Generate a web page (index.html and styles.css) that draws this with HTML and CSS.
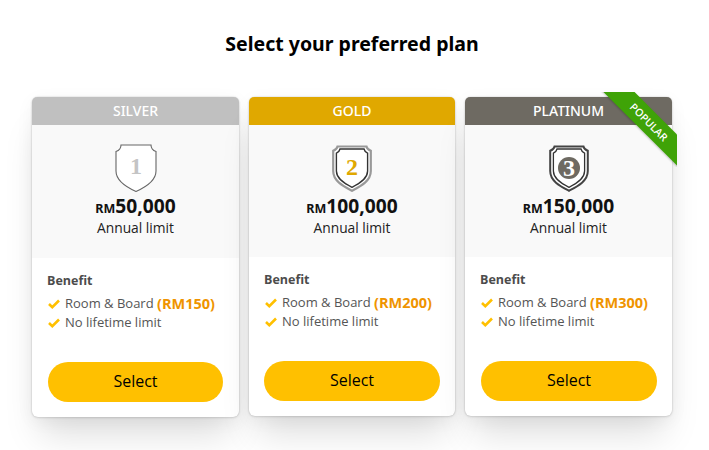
FILE: index.html
```html
<!DOCTYPE html>
<html lang="en">
<head>
<meta charset="utf-8">
<title>Select your preferred plan</title>
<link rel="stylesheet" href="styles.css">
</head>
<body>
<main class="page">
  <h1 class="title">Select your preferred plan</h1>
  <div class="plans">
    <section class="card card-silver">
      <div class="tier">SILVER</div>
      <div class="summary">
        <svg class="shield" viewBox="0 0 42 48" aria-hidden="true">
          <path class="line-thin" d="M6 1H36C36 4 38 6.500 41 7.500V27C41 37 31 43 21 47.500C11 43 1 37 1 27V7.500C4 6.500 6 4 6 1Z"/>
          <text x="21" y="30" class="digit digit-silver">1</text>
        </svg>
        <div class="price"><span class="cur">RM</span>50,000</div>
        <div class="limit">Annual limit</div>
      </div>
      <div class="details">
        <div class="benefit">Benefit</div>
        <ul class="list">
          <li><svg class="tick" viewBox="0 0 12 10" aria-hidden="true"><path d="M1 5L4.300 8.200L11 1.500"/></svg>Room &amp; Board <b class="extra">(RM150)</b></li>
          <li><svg class="tick" viewBox="0 0 12 10" aria-hidden="true"><path d="M1 5L4.300 8.200L11 1.500"/></svg>No lifetime limit</li>
        </ul>
        <button class="select">Select</button>
      </div>
    </section>
    <section class="card card-gold">
      <div class="tier">GOLD</div>
      <div class="summary">
        <svg class="shield shield-tight" viewBox="0 0 40 47" aria-hidden="true">
          <path class="line-outer" d="M5.500 1.500H34.500C35 3.500 36.500 5 38.800 5.800V26C38.800 36 29 41 20 45.800C11 41 1.200 36 1.200 26V5.800C3.500 5 5 3.500 5.500 1.500Z"/>
          <path class="line-inner" d="M8 4H18.500M21.500 4H32C32.500 6 33.800 7.500 35.600 8.200V26C35.600 34 27 38.800 20 42.300C13 38.800 4.400 34 4.400 26V8.200C6.200 7.500 7.500 6 8 4Z"/>
          <text x="20" y="30" class="digit digit-gold">2</text>
        </svg>
        <div class="price"><span class="cur">RM</span>100,000</div>
        <div class="limit">Annual limit</div>
      </div>
      <div class="details">
        <div class="benefit">Benefit</div>
        <ul class="list">
          <li><svg class="tick" viewBox="0 0 12 10" aria-hidden="true"><path d="M1 5L4.300 8.200L11 1.500"/></svg>Room &amp; Board <b class="extra">(RM200)</b></li>
          <li><svg class="tick" viewBox="0 0 12 10" aria-hidden="true"><path d="M1 5L4.300 8.200L11 1.500"/></svg>No lifetime limit</li>
        </ul>
        <button class="select">Select</button>
      </div>
    </section>
    <section class="card card-platinum">
      <div class="tier">PLATINUM</div>
      <div class="ribbon"><span>POPULAR</span></div>
      <div class="summary">
        <svg class="shield shield-tight" viewBox="0 0 40 47" aria-hidden="true">
          <path class="line-dark" d="M5.500 1.500H34.500C35 3.500 36.500 5 38.800 5.800V26C38.800 36 29 41 20 45.800C11 41 1.200 36 1.200 26V5.800C3.500 5 5 3.500 5.500 1.500Z"/>
          <path class="line-dark-thin" d="M8 4H18.500M21.500 4H32C32.500 6 33.800 7.500 35.600 8.200V26C35.600 34 27 38.800 20 42.300C13 38.800 4.400 34 4.400 26V8.200C6.200 7.500 7.500 6 8 4Z"/>
          <circle cx="20" cy="23" r="11" class="disc"/>
          <text x="20" y="30.500" class="digit digit-white">3</text>
        </svg>
        <div class="price"><span class="cur">RM</span>150,000</div>
        <div class="limit">Annual limit</div>
      </div>
      <div class="details">
        <div class="benefit">Benefit</div>
        <ul class="list">
          <li><svg class="tick" viewBox="0 0 12 10" aria-hidden="true"><path d="M1 5L4.300 8.200L11 1.500"/></svg>Room &amp; Board <b class="extra">(RM300)</b></li>
          <li><svg class="tick" viewBox="0 0 12 10" aria-hidden="true"><path d="M1 5L4.300 8.200L11 1.500"/></svg>No lifetime limit</li>
        </ul>
        <button class="select">Select</button>
      </div>
    </section>
  </div>
</main>
</body>
</html>
```
FILE: styles.css
```css
* { box-sizing: border-box; }
html, body { margin: 0; height: 100%; background: #fff; overflow: hidden; }
body { font-family: "Open Sans", "Noto Sans", sans-serif; color: #111; }
.page { padding: 30px 37px 0 32px; }
.title { margin: 0 0 39px; text-align: center; font-family: "Noto Sans", "Open Sans", sans-serif; font-size: 19.5px; line-height: 28px; font-weight: 700; color: #000; }
.plans { display: grid; grid-template-columns: 207px 206px 207px; column-gap: 10px; align-items: start; }
.card { position: relative; height: 319px; display: flex; flex-direction: column; background: #fff; border-radius: 6px; box-shadow: 0 0 2px rgba(0,0,0,.2), 0 1px 3px rgba(0,0,0,.08), 0 4px 18px rgba(0,0,0,.05), 0 26px 34px -8px rgba(0,0,0,.13); }
.card-silver { height: 320px; }
.tier { height: 28px; flex: none; border-radius: 5px 5px 0 0; text-align: center; color: #fff; font-family: "Noto Sans", "Open Sans", sans-serif; font-size: 14px; line-height: 28px; font-weight: 500; }
.card-silver .tier { background: #c0c0c0; }
.card-gold .tier { background: #e0a800; }
.card-platinum .tier { background: #6e6a62; }
.summary { flex: none; display: flex; flex-direction: column; align-items: center; padding-top: 19px; background: #f9f9f9; height: 132px; }
.card-silver .summary { height: 133px; }
.shield { display: block; width: 42px; height: 48px; flex: none; }
.shield-tight { width: 40px; height: 47px; margin-top: 1px; }
.line-thin { fill: #fff; stroke: #666; stroke-width: 1.1; }
.line-outer { fill: #fff; stroke: #999; stroke-width: 2.2; }
.line-inner { fill: none; stroke: #333; stroke-width: 1.4; }
.line-dark { fill: #fff; stroke: #444; stroke-width: 2; }
.line-dark-thin { fill: none; stroke: #333; stroke-width: 1.3; }
.disc { fill: #6e6a62; }
.digit { font-family: "Liberation Serif", serif; font-weight: 700; font-size: 24px; text-anchor: middle; }
.digit-silver { fill: #c4c4c4; }
.digit-gold { fill: #e0a800; }
.digit-white { fill: #fff; }
.price { margin-top: 2px; font-family: "Noto Sans", "Open Sans", sans-serif; font-size: 19.2px; line-height: 24px; font-weight: 700; color: #111; }
.card-gold .price, .card-platinum .price { margin-top: 2px; }
.cur { font-size: 12.5px; }
.limit { font-size: 13.8px; line-height: 19px; margin-top: -3px; color: #222; }
.details { flex: 1; padding: 14px 15px 15px; display: flex; flex-direction: column; }
.benefit { font-size: 12.5px; line-height: 18px; font-weight: 700; color: #4c4c4c; }
.list { list-style: none; margin: 4px 0 0; padding: 0; }
.list li { display: flex; align-items: center; font-size: 13px; line-height: 19px; color: #555; white-space: pre; }
.tick { width: 12px; height: 10px; margin: 0 5px 0 1px; flex: none; fill: none; stroke: #ffc000; stroke-width: 2.6; }
.extra { font-weight: 700; font-size: 14.5px; color: #ef9400; }
.select { margin: auto 0 0 1px; height: 40px; width: 176px; padding: 0 0 2px; border: 0; border-radius: 20px; background: #ffc000; font-family: "Open Sans", sans-serif; font-size: 16px; color: #000; }
.card-silver .select { width: 175px; }
.card-gold .select { margin-left: 0; }
.ribbon { position: absolute; top: -5px; right: -5px; width: 90px; height: 75px; overflow: hidden; pointer-events: none; }
.ribbon span { position: absolute; top: 19px; left: 1.5px; width: 120px; height: 22px; transform: rotate(45deg); background: #3fa307; color: #fff; font-size: 10.5px; line-height: 22px; font-weight: 600; text-align: center; box-shadow: 0 1px 2px rgba(0,0,0,.2); }
```
